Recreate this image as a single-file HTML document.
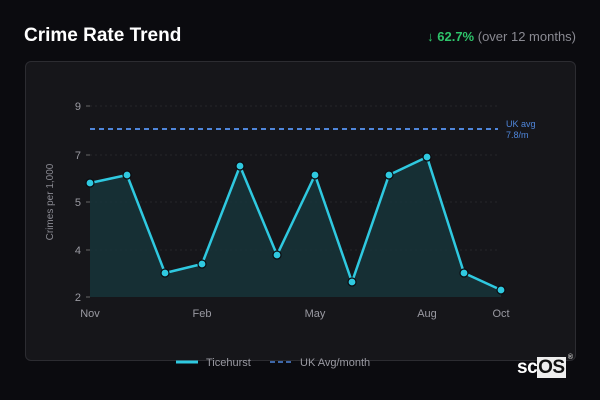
<!DOCTYPE html>
<html><head><style>
body{margin:0;width:600px;height:400px;background:#0b0b0f;font-family:"Liberation Sans",sans-serif;position:relative;overflow:hidden}
.t{position:absolute;left:24px;top:25px;color:#fff;font-weight:bold;font-size:19px}
.s{position:absolute;right:24px;top:29px;font-size:13px;color:#8a8a92}
.s b{color:#2ec46a}
.card{position:absolute;left:25px;top:61px;width:549px;height:298px;background:#16161a;border:1px solid #2c2c31;border-radius:6px}
svg{position:absolute;left:0;top:0}
.logo{position:absolute;left:517px;top:357px;font-size:19px;font-weight:bold;color:#fff;letter-spacing:-0.5px}
.logo span{background:#eee;color:#111;padding:0 1px}
.logo sup{font-size:7px;color:#ccc;position:absolute;top:-3px;right:-7px}
</style></head><body>
<div class="t">Crime Rate Trend</div>
<div class="s"><b>↓ 62.7%</b> (over 12 months)</div>
<div class="card"></div>
<svg width="600" height="400" font-family="Liberation Sans, sans-serif">
<g stroke="#26262b" stroke-dasharray="2 3" stroke-width="1">
<line x1="90" y1="106" x2="498" y2="106"/><line x1="90" y1="155" x2="498" y2="155"/><line x1="90" y1="202" x2="498" y2="202"/><line x1="90" y1="250" x2="498" y2="250"/>
</g>
<g stroke="#666" stroke-width="1"><line x1="86" y1="106" x2="90" y2="106"/><line x1="86" y1="155" x2="90" y2="155"/><line x1="86" y1="202" x2="90" y2="202"/><line x1="86" y1="250" x2="90" y2="250"/><line x1="86" y1="297" x2="90" y2="297"/></g>
<g fill="#9a9aa2" font-size="11" text-anchor="end"><text x="81" y="110">9</text><text x="81" y="159">7</text><text x="81" y="206">5</text><text x="81" y="254">4</text><text x="81" y="301">2</text></g>
<text transform="translate(53,202) rotate(-90)" fill="#8a8a92" font-size="10" text-anchor="middle">Crimes per 1,000</text>
<g fill="#9a9aa2" font-size="11" text-anchor="middle"><text x="90" y="317">Nov</text><text x="202" y="317">Feb</text><text x="315" y="317">May</text><text x="427" y="317">Aug</text><text x="501" y="317">Oct</text></g>
<polygon fill="#17363b" opacity="0.8" points="90,297 90,183 127,175 165,273 202,264 240,166 277,255 315,175 352,282 389,175 427,157 464,273 501,290 501,297"/>
<line x1="90" y1="129" x2="498" y2="129" stroke="#4f86db" stroke-width="2" stroke-dasharray="5 4"/>
<text x="506" y="127" fill="#4f86db" font-size="9">UK avg</text><text x="506" y="138" fill="#4f86db" font-size="9">7.8/m</text>
<polyline fill="none" stroke="#2fc9e0" stroke-width="2.5" stroke-linejoin="round" points="90,183 127,175 165,273 202,264 240,166 277,255 315,175 352,282 389,175 427,157 464,273 501,290"/>
<g fill="#2fc9e0" stroke="#0b0b0f" stroke-width="1.2">
<circle cx="90" cy="183" r="4"/><circle cx="127" cy="175" r="4"/><circle cx="165" cy="273" r="4"/><circle cx="202" cy="264" r="4"/><circle cx="240" cy="166" r="4"/><circle cx="277" cy="255" r="4"/><circle cx="315" cy="175" r="4"/><circle cx="352" cy="282" r="4"/><circle cx="389" cy="175" r="4"/><circle cx="427" cy="157" r="4"/><circle cx="464" cy="273" r="4"/><circle cx="501" cy="290" r="4"/>
</g>
<line x1="176" y1="362" x2="198" y2="362" stroke="#2fc9e0" stroke-width="3"/>
<text x="206" y="366" fill="#9a9aa2" font-size="11">Ticehurst</text>
<line x1="270" y1="362" x2="292" y2="362" stroke="#4f86db" stroke-width="1.5" stroke-dasharray="5 3"/>
<text x="300" y="366" fill="#9a9aa2" font-size="11">UK Avg/month</text>
</svg>
<div class="logo">sc<span>OS</span><sup>®</sup></div>
</body></html>
